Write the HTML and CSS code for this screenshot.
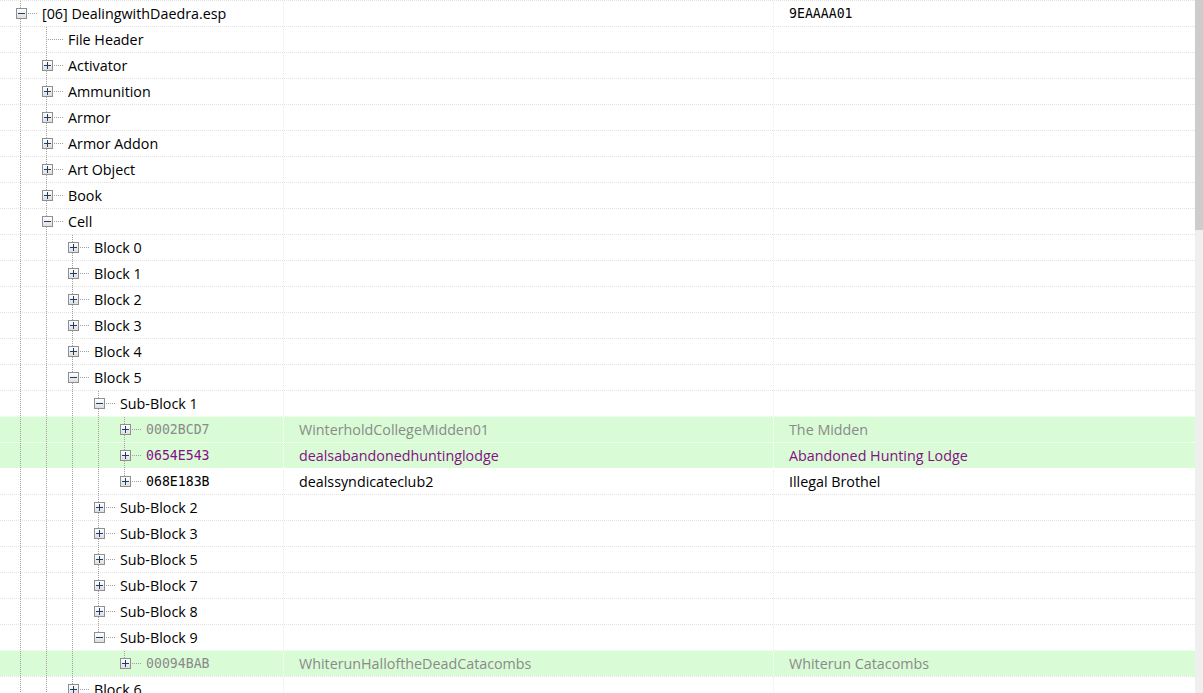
FILE: index.html
```html
<!DOCTYPE html>
<html lang="en">
  <head>
    <title>Plugin records</title>
    <link rel="stylesheet" href="styles.css">
  </head>
  <body>
    <main class="view">
      <section class="rows" id="rows"></section>
      <div class="scrollbar"><div class="thumb"></div></div>
    </main>

    <script>
      // level, guides (ancestor lines), last sibling?, toggle, name, editor id, full name, kind
      const rows = [
        [0, [], false, 'minus', '[06] DealingwithDaedra.esp', '', '9EAAAA01', 'root'],
        [1, [1], false, '', 'File Header'],
        [1, [1], false, 'plus', 'Activator'],
        [1, [1], false, 'plus', 'Ammunition'],
        [1, [1], false, 'plus', 'Armor'],
        [1, [1], false, 'plus', 'Armor Addon'],
        [1, [1], false, 'plus', 'Art Object'],
        [1, [1], false, 'plus', 'Book'],
        [1, [1], false, 'minus', 'Cell'],
        [2, [1, 1], false, 'plus', 'Block 0'],
        [2, [1, 1], false, 'plus', 'Block 1'],
        [2, [1, 1], false, 'plus', 'Block 2'],
        [2, [1, 1], false, 'plus', 'Block 3'],
        [2, [1, 1], false, 'plus', 'Block 4'],
        [2, [1, 1], false, 'minus', 'Block 5'],
        [3, [1, 1, 1], false, 'minus', 'Sub-Block 1'],
        [4, [1, 1, 1, 1], false, 'plus', '0002BCD7', 'WinterholdCollegeMidden01', 'The Midden', 'override'],
        [4, [1, 1, 1, 1], false, 'plus', '0654E543', 'dealsabandonedhuntinglodge', 'Abandoned Hunting Lodge', 'changed'],
        [4, [1, 1, 1, 1], true, 'plus', '068E183B', 'dealssyndicateclub2', 'Illegal Brothel', 'record'],
        [3, [1, 1, 1], false, 'plus', 'Sub-Block 2'],
        [3, [1, 1, 1], false, 'plus', 'Sub-Block 3'],
        [3, [1, 1, 1], false, 'plus', 'Sub-Block 5'],
        [3, [1, 1, 1], false, 'plus', 'Sub-Block 7'],
        [3, [1, 1, 1], false, 'plus', 'Sub-Block 8'],
        [3, [1, 1, 1], true, 'minus', 'Sub-Block 9'],
        [4, [1, 1, 1, 0], true, 'plus', '00094BAB', 'WhiterunHalloftheDeadCatacombs', 'Whiterun Catacombs', 'override'],
        [2, [1, 1], false, 'plus', 'Block 6']
      ];

      const list = document.querySelector('#rows');
      for (const [level, guides, last, toggle, name, edid = '', full = '', kind = ''] of rows) {
        const row = document.createElement('div');
        row.className = 'row ' + kind;

        const tree = document.createElement('div');
        tree.className = 'cell tree';
        for (const g of guides) {
          const guide = document.createElement('span');
          guide.className = g ? 'guide on' : 'guide';
          tree.append(guide);
        }
        const conn = document.createElement('span');
        conn.className = last ? 'conn last' : 'conn';
        if (toggle) {
          const box = document.createElement('span');
          box.className = 'toggle ' + toggle;
          conn.append(box);
        }
        tree.append(conn);
        const label = document.createElement('span');
        label.className = (kind && kind !== 'root') ? 'label mono' : 'label';
        label.textContent = name;
        tree.append(label);

        const edidCell = document.createElement('div');
        edidCell.className = 'cell';
        edidCell.textContent = edid;

        const fullCell = document.createElement('div');
        fullCell.className = kind === 'root' ? 'cell mono' : 'cell';
        fullCell.textContent = full;

        row.append(tree, edidCell, fullCell);
        list.append(row);
      }
    </script>
  </body>
</html>
```

FILE: styles.css
```css
:root {
  --row-line: #e2e2e2;
  --col-line: #ebebeb;
  --tree-line: #a0a0a0;
  --override-bg: #d9fcd6;
  --override-text: #8a8a8a;
  --changed-text: #850f85;
  --toggle-border: #8f8f8f;
  --toggle-glyph: #1f3c6c;
}

html, body {
  margin: 0;
  height: 100%;
  overflow: hidden;
  background: #fff;
}

body {
  font-family: "Open Sans", "Noto Sans", sans-serif;
  font-size: 14.3px;
  color: #000;
}

.view {
  display: flex;
  height: 100%;
}

.rows {
  flex: 1;
  overflow: hidden;
}

.scrollbar {
  width: 8px;
  background: #efefef;
}
  .scrollbar .thumb {
    height: 230px;
    background: #cdcdcd;
  }

.row {
  box-sizing: border-box;
  height: 26px;
  border-top: 1px dotted var(--row-line);
  display: grid;
  grid-template-columns: 283px 490px 1fr;
}
  .row.override,
  .row.changed {
    background: var(--override-bg);
    border-top-color: #fff;
  }
  .row.override { color: var(--override-text); }
  .row.changed { color: var(--changed-text); }
  .row.changed + .row.record {
    border-top-color: #fff;
  }

.cell {
  display: flex;
  align-items: center;
  padding-left: 15px;
  white-space: nowrap;
  border-left: 1px dotted var(--col-line);
}
  .row.override .cell,
  .row.changed .cell {
    border-left-color: #fff;
  }
  .cell.tree {
    padding-left: 7px;
    border-left: none;
    align-items: stretch;
  }

.mono {
  font-family: "DejaVu Sans Mono", "Liberation Mono", monospace;
  font-size: 13.2px;
}

/* dotted tree lines drawn as 1px repeating gradients */
.guide {
  width: 26px;
  flex: none;
}
  .guide.on {
    background: repeating-linear-gradient(to bottom, var(--tree-line) 0 1px, transparent 1px 2px) 13px 0 / 1px 100% no-repeat;
  }

.conn {
  width: 31px;
  flex: none;
  display: flex;
  align-items: center;
  padding-left: 9px;
  box-sizing: border-box;
  background:
    repeating-linear-gradient(to bottom, var(--tree-line) 0 1px, transparent 1px 2px) 13px 0 / 1px 100% no-repeat,
    repeating-linear-gradient(to right, var(--tree-line) 0 1px, transparent 1px 2px) 13px 12px / 18px 1px no-repeat;
}
  .conn.last {
    background:
      repeating-linear-gradient(to bottom, var(--tree-line) 0 1px, transparent 1px 2px) 13px 0 / 1px 13px no-repeat,
      repeating-linear-gradient(to right, var(--tree-line) 0 1px, transparent 1px 2px) 13px 12px / 18px 1px no-repeat;
  }

.toggle {
  box-sizing: border-box;
  width: 11px;
  height: 11px;
  border: 1px solid var(--toggle-border);
  background: linear-gradient(#fff, #dedede);
}
  .toggle.minus {
    background:
      linear-gradient(var(--toggle-glyph), var(--toggle-glyph)) center / 7px 1px no-repeat,
      linear-gradient(#fff, #dedede);
  }
  .toggle.plus {
    background:
      linear-gradient(var(--toggle-glyph), var(--toggle-glyph)) center / 7px 1px no-repeat,
      linear-gradient(var(--toggle-glyph), var(--toggle-glyph)) center / 1px 7px no-repeat,
      linear-gradient(#fff, #dedede);
  }

.label {
  display: flex;
  align-items: center;
  margin-left: 4px;
}
```
